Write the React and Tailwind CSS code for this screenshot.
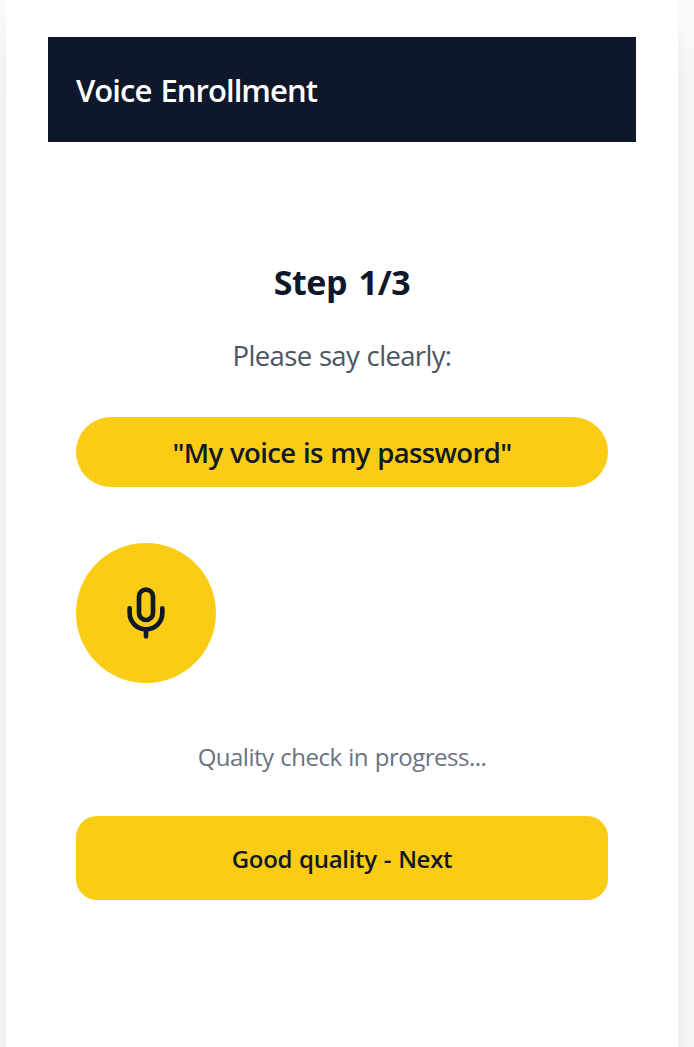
import React from "react";
import { Mic } from "lucide-react";

const App = () => {
  return (
    <div className="h-screen overflow-hidden bg-[#f9fafb] pl-1.5 font-['Open_Sans','Noto_Sans',sans-serif]">
      <div className="h-[1200px] w-[672px] bg-white px-[42px] pt-[37px] shadow-[0_35px_44px_-9px_rgba(0,0,0,0.1),0_14px_18px_-10px_rgba(0,0,0,0.1)]">
        {/* Header */}
        <header className="flex h-[105px] items-center bg-[#0f172a] px-7 pt-0.5 text-white">
          <h1 className="whitespace-nowrap text-[31px] leading-[49px] font-semibold tracking-[-0.95px] [word-spacing:2px]">
            Voice Enrollment
          </h1>
        </header>

        <main className="px-7 pt-[119px] text-center">
          <h2 className="text-[34px] leading-[42px] font-bold tracking-[-0.4px] text-[#0f172a] [word-spacing:3px]">
            Step 1/3
          </h2>
          <p className="mt-[32px] text-[27.5px] leading-[42px] tracking-[-0.65px] text-[#4b5563] [word-spacing:1px]">
            Please say clearly:
          </p>

          {/* Phrase to read out */}
          <div className="mt-[40px] flex h-[70px] items-center justify-center rounded-full bg-[#facc15] pt-0.5 text-[27.5px] font-semibold tracking-[-0.65px] text-[#111827] [word-spacing:1px]">
            "My voice is my password"
          </div>

          <button className="mt-14 flex size-[140px] items-center justify-center rounded-full bg-[#facc15] text-[#111827]">
            <Mic size={56} />
          </button>

          <p className="mt-[56px] text-[24px] leading-[35px] tracking-[-0.5px] text-[#6b7280] [word-spacing:1px]">
            Quality check in progress...
          </p>

          <button className="mt-[42px] h-[84px] w-full rounded-[21px] bg-[#facc15] pt-0.5 text-[24px] font-semibold tracking-[-0.3px] text-[#111827] [word-spacing:1px]">
            Good quality - Next
          </button>
        </main>
      </div>
    </div>
  );
};

export default App;
